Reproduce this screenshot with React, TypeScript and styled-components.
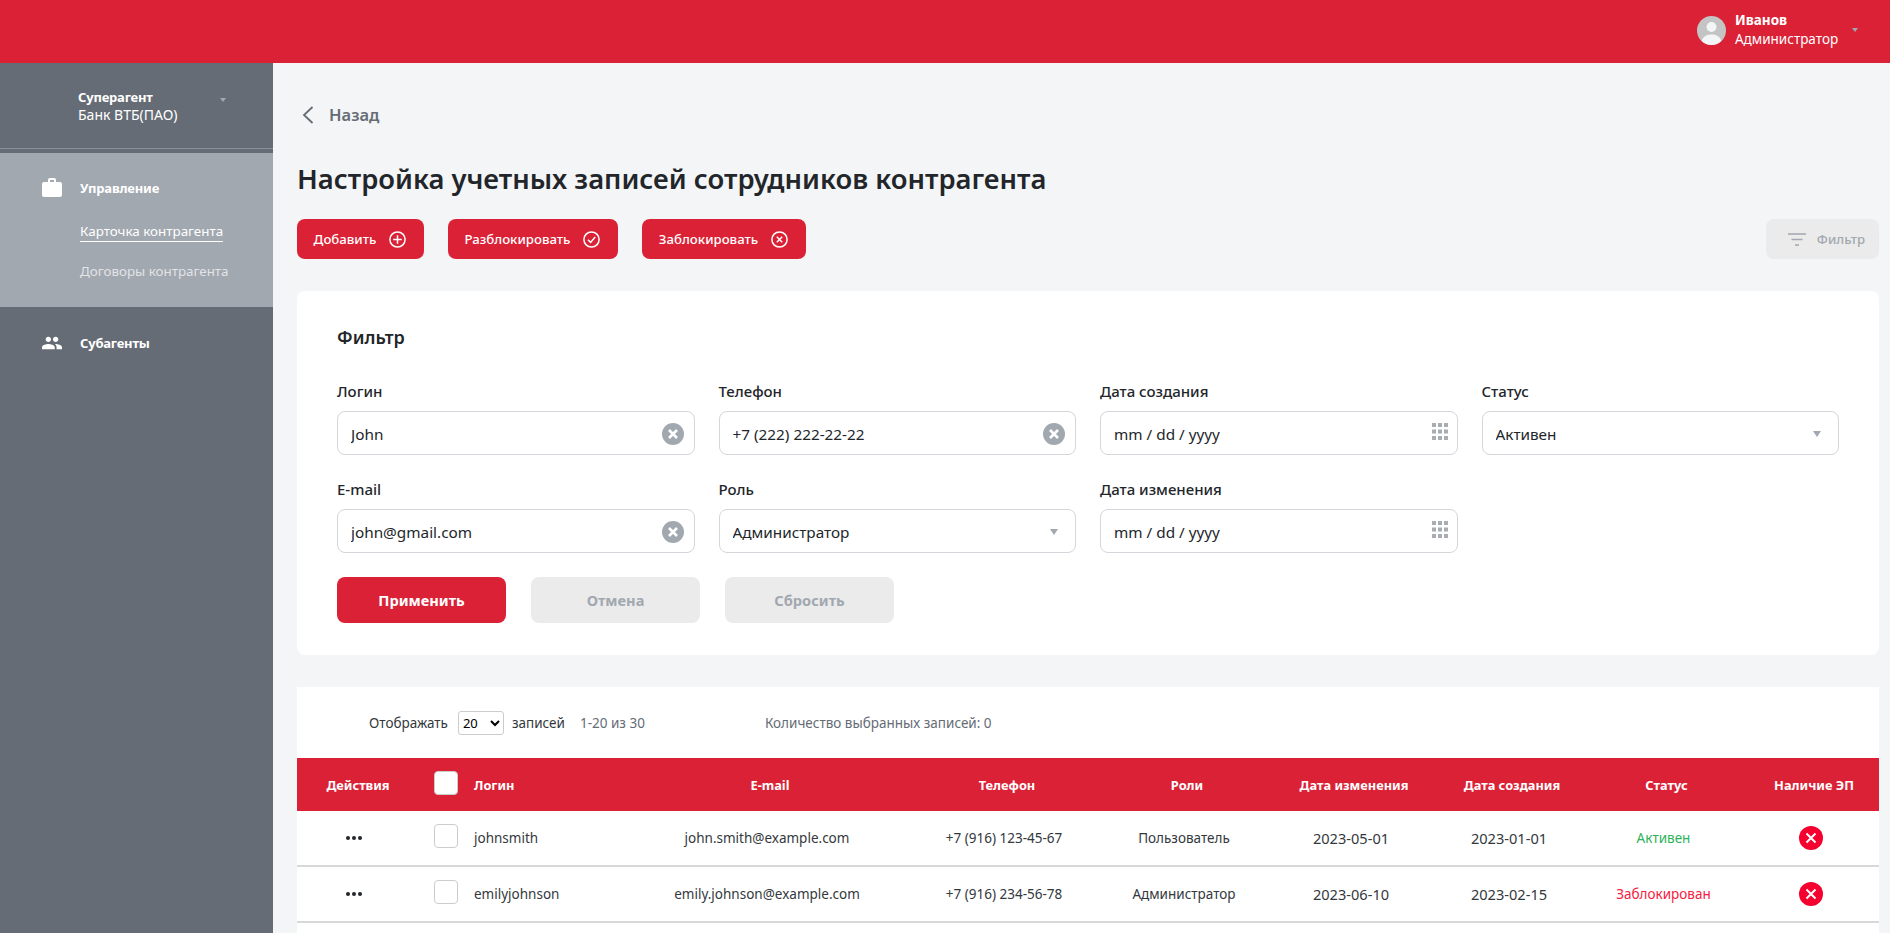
import React from "react";
import styled, { createGlobalStyle } from "styled-components";

const RED = "#db2136";

const GlobalStyle = createGlobalStyle`
  html, body {
    margin: 0;
    padding: 0;
    height: 100%;
    overflow: hidden;
    background: #f4f5f7;
    font-family: "Noto Sans", "Open Sans", sans-serif;
  }
  * { box-sizing: border-box; }
`;

const Page = styled.div`
  height: 933px;
  overflow: hidden;
  display: flex;
  flex-direction: column;
`;

const TopBar = styled.header`
  height: 63px;
  flex: none;
  background: ${RED};
  display: flex;
  justify-content: flex-end;
  align-items: center;
  padding: 0 32px 3px 0;
`;

const Avatar = styled.svg`
  width: 29px;
  height: 29px;
  margin-right: 9px;
`;

const UserText = styled.div`
  width: 117px;
  color: #fff;
  font-size: 13.5px;
  line-height: 19px;
`;

const UserName = styled.div`
  font-weight: 700;
  margin-top: -1px;
`;

const Caret = styled.span<{ $big?: boolean }>`
  flex: none;
  width: 0;
  height: 0;
  border-left: ${(p) => (p.$big ? "4.5px" : "3.5px")} solid transparent;
  border-right: ${(p) => (p.$big ? "4.5px" : "3.5px")} solid transparent;
  border-top: ${(p) => (p.$big ? "6px" : "4px")} solid #a2a8b0;
`;

const Body = styled.div`
  flex: 1;
  display: flex;
  min-height: 0;
`;

const Sidebar = styled.aside`
  width: 273px;
  flex: none;
  background: #656c75;
  color: #fff;
`;

const Agent = styled.div`
  height: 86px;
  padding: 24px 47px 0 78px;
  display: flex;
  justify-content: space-between;
  align-items: flex-start;
  font-size: 14px;
  line-height: 18px;
  border-bottom: 1px solid #8a9099;
`;

const AgentCaret = styled.div`
  padding-top: 16px;
`;

const Bold = styled.div`
  font-size: 13px;
  font-weight: 700;
  letter-spacing: -0.2px;
  padding-top: 1px;
`;

const Divider = styled.div`
  height: 4px;
`;

const MenuGroup = styled.div<{ $active?: boolean }>`
  background: ${(p) => (p.$active ? "#a2a8b0" : "transparent")};
  height: ${(p) => (p.$active ? "154px" : "auto")};
  padding: ${(p) => (p.$active ? "24px" : "25px")} 0 0 42px;
`;

const MenuHead = styled.div`
  display: flex;
  align-items: center;
  gap: 18px;
  font-size: 13px;
  font-weight: 700;
  letter-spacing: -0.2px;
  height: 22px;
`;

const SubLink = styled.div<{ $current?: boolean }>`
  margin: ${(p) => (p.$current ? "23px" : "20px")} 0 0 38px;
  width: max-content;
  font-size: 13.4px;
  line-height: 18px;
  padding-bottom: 1px;
  color: ${(p) => (p.$current ? "#fff" : "#e1e3e6")};
  border-bottom: 1px solid ${(p) => (p.$current ? "#fff" : "transparent")};
`;

const Main = styled.main`
  flex: 1;
  min-width: 0;
  padding: 40px 11px 0 24px;
`;

const Back = styled.div`
  height: 24px;
  display: flex;
  align-items: center;
  gap: 15px;
  padding: 0 0 1px 5px;
  color: #656c75;
  font-size: 16.5px;
  font-weight: 600;
`;

const Title = styled.h1`
  margin: 32px 0 20px;
  height: 40px;
  font-size: 27.4px;
  line-height: 40px;
  font-weight: 600;
  color: #22262a;
  white-space: nowrap;
`;

const Actions = styled.div`
  display: flex;
  gap: 24px;
  height: 40px;
`;

const ActionButton = styled.button<{ $w: number }>`
  width: ${(p) => p.$w}px;
  border: 0;
  border-radius: 8px;
  padding: 0 1px 0 0;
  background: ${RED};
  color: #fff;
  font: 500 13.2px "Noto Sans", sans-serif;
  display: flex;
  align-items: center;
  justify-content: center;
  gap: 13px;
`;

const FilterToggle = styled.button`
  margin-left: auto;
  width: 113px;
  border: 0;
  border-radius: 8px;
  padding: 0 0 0 8px;
  background: #ebebeb;
  color: #a2a8b0;
  font: 500 13.2px "Noto Sans", sans-serif;
  display: flex;
  align-items: center;
  justify-content: center;
  gap: 11px;
`;

const FilterCard = styled.section`
  margin-top: 32px;
  height: 364px;
  padding: 34px 40px 0;
  background: #fff;
  border-radius: 8px;
`;

const FilterTitle = styled.h2`
  margin: 0 0 32px;
  font-size: 18px;
  line-height: 24px;
  font-weight: 600;
  color: #22262a;
`;

const FormGrid = styled.div`
  display: grid;
  grid-template-columns: repeat(4, 1fr);
  column-gap: 24px;
  row-gap: 24px;
`;

const Field = styled.label`
  display: block;
`;

const FieldLabel = styled.div`
  font-size: 15px;
  line-height: 20px;
  font-weight: 500;
  color: #22262a;
  margin-bottom: 10px;
`;

const InputBox = styled.div<{ $right: number }>`
  height: 44px;
  border: 1px solid #d3d6da;
  border-radius: 8px;
  background: #fff;
  display: flex;
  align-items: center;
  padding: 1px ${(p) => p.$right}px 0 13px;
`;

const TextInput = styled.input`
  flex: 1;
  min-width: 0;
  border: 0;
  outline: 0;
  padding: 0;
  background: none;
  font: 400 15.3px "Noto Sans", sans-serif;
  color: #22262a;
`;

const FormButtons = styled.div`
  display: flex;
  gap: 25px;
  margin-top: 24px;
`;

const FormButton = styled.button<{ $primary?: boolean }>`
  width: 169px;
  height: 46px;
  border: 0;
  border-radius: 8px;
  background: ${(p) => (p.$primary ? RED : "#ebebeb")};
  color: ${(p) => (p.$primary ? "#fff" : "#a2a8b0")};
  font: 700 14.6px "Noto Sans", sans-serif;
`;

const TableCard = styled.section`
  margin-top: 32px;
  min-height: 300px;
  background: #fff;
`;

const Toolbar = styled.div`
  height: 71px;
  display: flex;
  align-items: center;
  padding-left: 72px;
  font-size: 13.5px;
  color: #33383d;
`;

const PageSize = styled.select`
  width: 46px;
  height: 24px;
  margin: 0 8px 0 10px;
  border: 1px solid #ccc;
  border-radius: 3px;
  background: #fff;
  font: 400 13px "Noto Sans", sans-serif;
`;

const Muted = styled.span<{ $left: number }>`
  margin-left: ${(p) => p.$left}px;
  color: #656c75;
`;

const cols = "116px 61px 166px 254px 220px 140px 194px 122px 187px 122px";

const HeadRow = styled.div`
  display: grid;
  grid-template-columns: ${cols};
  height: 53px;
  align-items: center;
  background: ${RED};
  color: #fff;
  font-size: 12.8px;
  font-weight: 700;
`;

const Row = styled.div`
  display: grid;
  grid-template-columns: ${cols};
  height: 56px;
  align-items: center;
  border-bottom: 2px solid #d8d8d8;
  font-size: 13.5px;
  color: #33383d;
  background: #fff;
`;

const HeadCell = styled.div<{ $end?: boolean }>`
  text-align: center;
  white-space: nowrap;
  padding: ${(p) => (p.$end ? "0 8px 0 0" : "0 0 0 6px")};
`;

const HeadLogin = styled.div`
  white-space: nowrap;
`;

const Cell = styled.div<{ $color?: string; $date?: boolean }>`
  text-align: center;
  white-space: nowrap;
  font-size: ${(p) => (p.$date ? "14.6px" : "inherit")};
  color: ${(p) => p.$color || "inherit"};
`;

const LoginCell = styled.div`
  white-space: nowrap;
`;

const Dots = styled.div`
  display: flex;
  justify-content: center;
  gap: 2px;
  padding-right: 2px;
`;

const Dot = styled.span`
  width: 4px;
  height: 4px;
  border-radius: 50%;
  background: #22262a;
`;

const Check = styled.span`
  display: block;
  width: 24px;
  height: 24px;
  margin: -4px 0 0 21px;
  background: #fff;
  border: 1.5px solid #cccccc;
  border-radius: 4px;
`;

const EpCell = styled.div`
  display: flex;
  justify-content: center;
  padding-right: 14px;
`;

const EpIcon = styled.svg`
  width: 24px;
  height: 24px;
`;

const CircleIcon = styled.svg`
  width: 17px;
  height: 17px;
  fill: none;
  stroke: #fff;
  stroke-width: 1.5;
`;

const IconPlus = () => (
  <CircleIcon viewBox="0 0 17 17">
    <circle cx="8.5" cy="8.5" r="7.6" />
    <path d="M8.5 4.2v8.600M4.200 8.500h8.600" />
  </CircleIcon>
);

const IconCheck = () => (
  <CircleIcon viewBox="0 0 17 17">
    <circle cx="8.5" cy="8.5" r="7.6" />
    <path d="M5 8.800l2.600 2.600L12.200 6" />
  </CircleIcon>
);

const IconCross = () => (
  <CircleIcon viewBox="0 0 17 17">
    <circle cx="8.5" cy="8.5" r="7.6" />
    <path d="M5.800 5.800l5.400 5.400M11.200 5.800l-5.400 5.400" />
  </CircleIcon>
);

const IconClear = () => (
  <svg width="22" height="22" viewBox="0 0 22 22">
    <circle cx="11" cy="11" r="11" fill="#a2a8b0" />
    <path d="M7 7l8 8M15 7l-8 8" stroke="#fff" strokeWidth="2.6" />
  </svg>
);

const GridIcon = styled.svg`
  width: 16px;
  height: 17px;
  margin-top: -5px;
  fill: #a8adb4;
`;

const IconGrid = () => (
  <GridIcon viewBox="0 0 16 17">
    {[0, 6.5, 13].map((y) =>
      [0, 6, 12].map((x) => <rect key={`${x}-${y}`} x={x} y={y} width="4" height="4" />)
    )}
  </GridIcon>
);

const ClearField = ({ label, value }: { label: string; value: string }) => (
  <Field>
    <FieldLabel>{label}</FieldLabel>
    <InputBox $right={10}>
      <TextInput defaultValue={value} />
      <IconClear />
    </InputBox>
  </Field>
);

const DateField = ({ label }: { label: string }) => (
  <Field>
    <FieldLabel>{label}</FieldLabel>
    <InputBox $right={9}>
      <TextInput defaultValue="mm / dd / yyyy" />
      <IconGrid />
    </InputBox>
  </Field>
);

const SelectField = ({ label, value }: { label: string; value: string }) => (
  <Field>
    <FieldLabel>{label}</FieldLabel>
    <InputBox $right={17}>
      <TextInput defaultValue={value} />
      <Caret $big />
    </InputBox>
  </Field>
);

const users = [
  { login: "johnsmith", email: "john.smith@example.com", phone: "+7 (916) 123-45-67", role: "Пользователь", changed: "2023-05-01", created: "2023-01-01", status: "Активен", color: "#2fb35c" },
  { login: "emilyjohnson", email: "emily.johnson@example.com", phone: "+7 (916) 234-56-78", role: "Администратор", changed: "2023-06-10", created: "2023-02-15", status: "Заблокирован", color: "#f5203f" },
];

const App: React.FC = () => (
  <>
    <GlobalStyle />
    <Page>
      <TopBar>
        <Avatar viewBox="0 0 29 29">
          <circle cx="14.5" cy="14.5" r="14.5" fill="#c4c4c4" />
          <circle cx="14.5" cy="11" r="5" fill="#f4f5f7" />
          <path d="M4.600 25c1.500-5 5.500-6.500 9.900-6.500s8.400 1.500 9.900 6.500a14.500 14.500 0 0 1-19.800 0z" fill="#f4f5f7" />
        </Avatar>
        <UserText>
          <UserName>Иванов</UserName>
          <div>Администратор</div>
        </UserText>
        <Caret />
      </TopBar>
      <Body>
        <Sidebar>
          <Agent>
            <div>
              <Bold>Суперагент</Bold>
              <div>Банк ВТБ(ПАО)</div>
            </div>
            <AgentCaret>
              <Caret />
            </AgentCaret>
          </Agent>
          <Divider />
          <MenuGroup $active>
            <MenuHead>
              <svg width="20" height="20" viewBox="2 2 20 20" fill="#fff">
                <path d="M20 6h-4V4c0-1.110-.89-2-2-2h-4c-1.110 0-2 .89-2 2v2H4c-1.110 0-1.990.89-1.990 2L2 19c0 1.110.89 2 2 2h16c1.110 0 2-.89 2-2V8c0-1.110-.89-2-2-2zm-6 0h-4V4h4v2z" />
              </svg>
              Управление
            </MenuHead>
            <SubLink $current>Карточка контрагента</SubLink>
            <SubLink>Договоры контрагента</SubLink>
          </MenuGroup>
          <MenuGroup>
            <MenuHead>
              <svg width="20" height="20" viewBox="1 1 22 22" fill="#fff">
                <path d="M16 11c1.660 0 2.990-1.340 2.990-3S17.660 5 16 5c-1.660 0-3 1.340-3 3s1.340 3 3 3zm-8 0c1.660 0 2.990-1.340 2.990-3S9.660 5 8 5C6.340 5 5 6.340 5 8s1.340 3 3 3zm0 2c-2.330 0-7 1.170-7 3.500V19h14v-2.500c0-2.330-4.670-3.500-7-3.500zm8 0c-.29 0-.62.020-.97.050 1.160.84 1.970 1.970 1.970 3.450V19h6v-2.500c0-2.330-4.670-3.500-7-3.500z" />
              </svg>
              Субагенты
            </MenuHead>
          </MenuGroup>
        </Sidebar>
        <Main>
          <Back>
            <svg width="12" height="18" viewBox="0 0 12 18" fill="none" stroke="#656c75" strokeWidth="1.800">
              <path d="M10.500 1L2 9l8.500 8" />
            </svg>
            Назад
          </Back>
          <Title>Настройка учетных записей сотрудников контрагента</Title>
          <Actions>
            <ActionButton $w={127}>Добавить <IconPlus /></ActionButton>
            <ActionButton $w={170}>Разблокировать <IconCheck /></ActionButton>
            <ActionButton $w={164}>Заблокировать <IconCross /></ActionButton>
            <FilterToggle>
              <svg width="18" height="13" viewBox="0 0 18 13" stroke="#a2a8b0" strokeWidth="1.500">
                <path d="M0 1h18M3.500 6.500h11M7 12h4" />
              </svg>
              Фильтр
            </FilterToggle>
          </Actions>
          <FilterCard>
            <FilterTitle>Фильтр</FilterTitle>
            <FormGrid>
              <ClearField label="Логин" value="John" />
              <ClearField label="Телефон" value="+7 (222) 222-22-22" />
              <DateField label="Дата создания" />
              <SelectField label="Статус" value="Активен" />
              <ClearField label="E-mail" value="john@gmail.com" />
              <SelectField label="Роль" value="Администратор" />
              <DateField label="Дата изменения" />
            </FormGrid>
            <FormButtons>
              <FormButton $primary>Применить</FormButton>
              <FormButton>Отмена</FormButton>
              <FormButton>Сбросить</FormButton>
            </FormButtons>
          </FilterCard>
          <TableCard>
            <Toolbar>
              Отображать
              <PageSize defaultValue="20">
                <option>10</option>
                <option>20</option>
                <option>50</option>
              </PageSize>
              записей
              <Muted $left={15}>1-20 из 30</Muted>
              <Muted $left={120}>Количество выбранных записей: 0</Muted>
            </Toolbar>
            <HeadRow>
              <HeadCell>Действия</HeadCell>
              <Check />
              <HeadLogin>Логин</HeadLogin>
              <HeadCell>E-mail</HeadCell>
              <HeadCell>Телефон</HeadCell>
              <HeadCell>Роли</HeadCell>
              <HeadCell>Дата изменения</HeadCell>
              <HeadCell>Дата создания</HeadCell>
              <HeadCell>Статус</HeadCell>
              <HeadCell $end>Наличие ЭП</HeadCell>
            </HeadRow>
            {users.map((u) => (
              <Row key={u.login}>
                <Dots><Dot /><Dot /><Dot /></Dots>
                <Check />
                <LoginCell>{u.login}</LoginCell>
                <Cell>{u.email}</Cell>
                <Cell>{u.phone}</Cell>
                <Cell>{u.role}</Cell>
                <Cell $date>{u.changed}</Cell>
                <Cell $date>{u.created}</Cell>
                <Cell $color={u.color}>{u.status}</Cell>
                <EpCell>
                  <EpIcon viewBox="0 0 24 24">
                    <circle cx="12" cy="12" r="12" fill="#f5002f" />
                    <path d="M7.500 7.500l9 9M16.500 7.500l-9 9" stroke="#fff" strokeWidth="2" />
                  </EpIcon>
                </EpCell>
              </Row>
            ))}
          </TableCard>
        </Main>
      </Body>
    </Page>
  </>
);

export default App;
